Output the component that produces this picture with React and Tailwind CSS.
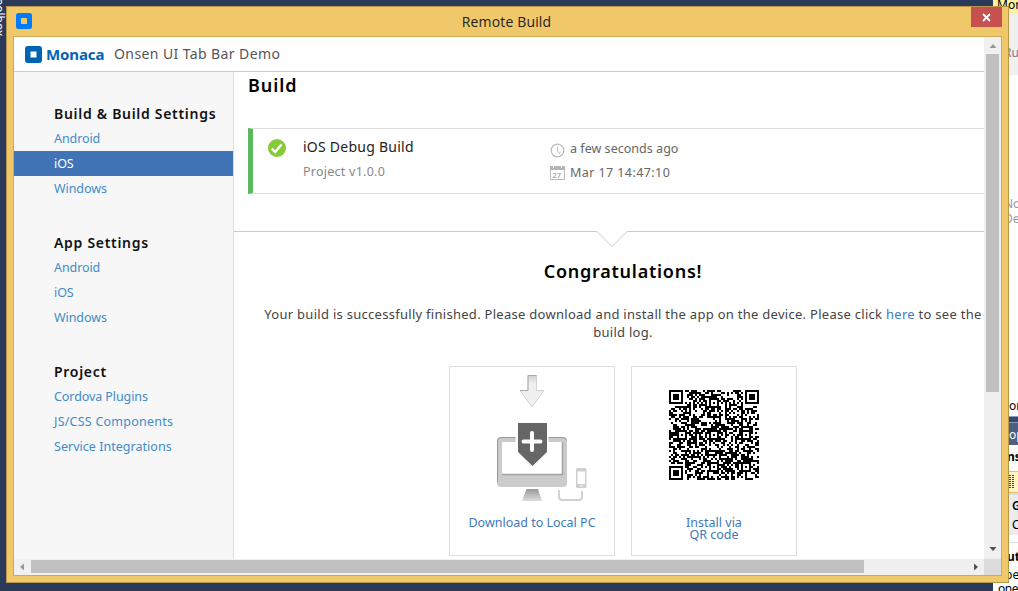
function T({ c = "", children }) {
  return <span className={"block whitespace-nowrap " + c}>{children}</span>;
}

const N = 45;
function qrPath() {
  let seed = 20177;
  const rnd = () => {
    seed = (seed * 1103515245 + 12345) % 2147483648;
    return seed / 2147483648;
  };
  const g = Array.from({ length: N }, () => Array.from({ length: N }, () => rnd() < 0.54));
  const square = (cx, cy, r, fn) => {
    for (let y = -r; y <= r; y++)
      for (let x = -r; x <= r; x++) {
        const yy = cy + y, xx = cx + x;
        if (yy >= 0 && xx >= 0 && yy < N && xx < N) g[yy][xx] = fn(Math.max(Math.abs(x), Math.abs(y)));
      }
  };
  for (let i = 8; i < N - 8; i++) { g[6][i] = i % 2 === 0; g[i][6] = i % 2 === 0; }
  [[22, 6], [6, 22], [22, 22], [38, 22], [22, 38], [38, 38]].forEach(([x, y]) => square(x, y, 2, (d) => d !== 1));
  [[3, 3], [41, 3], [3, 41]].forEach(([x, y]) => square(x, y, 4, (d) => d !== 2 && d !== 4));
  let p = "";
  g.forEach((row, y) => row.forEach((on, x) => { if (on) p += `M${x} ${y}h1v1h-1z`; }));
  return p;
}
const QR = qrPath();

const groups = [
  { title: "Build & Build Settings", items: [["Android"], ["iOS", true], ["Windows"]] },
  { title: "App Settings", items: [["Android"], ["iOS"], ["Windows"]] },
  { title: "Project", items: [["Cordova Plugins"], ["JS/CSS Components", false, "tracking-[0.23px]"], ["Service Integrations", false, "tracking-[0.03px]"]] },
];

function Sidebar() {
  return (
    <nav className="w-[220px] shrink-0 border-r border-[#ddd] bg-[#f7f7f7] pt-[29px]">
      {groups.map((g) => (
        <section key={g.title} className="mb-[29px]">
          <h2 className="h-[25px] pl-10 text-[14px] leading-[25px] font-semibold tracking-[0.7px] whitespace-nowrap text-[#111]">{g.title}</h2>
          {g.items.map(([n, on, track = "tracking-[-0.08px]"]) => (
            <a key={n} className={"block h-[25px] pl-10 text-[12.5px] leading-[25px] whitespace-nowrap " + track + (on ? " bg-[#4174b7] text-white" : " text-[#428bca]")}>{n}</a>
          ))}
        </section>
      ))}
    </nav>
  );
}

function DownloadArt() {
  return (
    <svg width="94" height="130" viewBox="0 0 94 130" className="block">
      <defs>
        <linearGradient id="ag" x1="0" y1="0" x2="0" y2="1"><stop offset="0" stopColor="#d2d2d2" /><stop offset=".25" stopColor="#eee" /><stop offset="1" stopColor="#f1f1f1" /></linearGradient>
        <linearGradient id="sg" x1="0" y1="0" x2="0" y2="1"><stop offset="0" stopColor="#999" /><stop offset="1" stopColor="#ddd" /></linearGradient>
      </defs>
      <path d="M31 1.500h8.500v15h7.500L35 33 23 16.500h8z" fill="url(#ag)" stroke="#c3c3c3" strokeWidth=".7" />
      <path d="M31 16V1.500H39.500M23 16.500h8" fill="none" stroke="#aaa" />
      <rect x="0" y="63" width="70" height="50" rx="4" fill="#cbcbcb" />
      <path d="M.5 108V67q0-3.500 3.500-3.500H66q3.500 0 3.500 3" fill="none" stroke="#999" />
      <path d="M5 68h60v32H5z" fill="#fff" />
      <path d="M5 100.500h60.500V68" fill="none" stroke="#a2a2a2" strokeWidth="1.500" />
      <path d="M18.500 62h33v24L35 99 18.500 86z" fill="#fff" />
      <path d="M21 49h29v29L35.500 92 21 78z" fill="#666" />
      <path d="M35 59v17M26.500 67.500h17" stroke="#fff" strokeWidth="4" strokeLinecap="round" />
      <path d="M29.500 115h11.500l4 12H25z" fill="url(#sg)" />
      <path d="M62 116v7q0 3 3 3h17q3 0 3-3v-6" fill="none" stroke="#d2d2d2" strokeWidth="2" />
      <rect x="79" y="94" width="10.500" height="20" rx="1.500" fill="#cfcfcf" />
      <path d="M80.500 97.500h7.500V110h-7.500z" fill="#fff" />
      <path d="M83 112h2.500" stroke="#fff" />
    </svg>
  );
}

function Header() {
  return (
    <header className="flex h-[35px] shrink-0 items-center border-b border-[#ccc] bg-white pl-[11px]">
      <svg width="17" height="17" viewBox="0 0 17 17"><rect width="17" height="17" rx="3" fill="#0064b5" /><path d="M5.500 5.500h6v6h-6z" fill="#fff" /></svg>
      <T c="ml-[4px] w-[68px] text-[15px] leading-[33px] font-bold tracking-[-0.1px] text-[#0064b5]">Monaca</T>
      <T c="pb-px text-[14px] leading-[33px] tracking-[0.4px] text-[#555]">Onsen UI Tab Bar Demo</T>
    </header>
  );
}

function BuildRow() {
  return (
    <div className="ml-[14px] flex h-[66px] border-y border-l-[5px] border-y-[#ddd] border-l-[#5cb85c]">
      <svg width="18" height="18" viewBox="0 0 18 18" className="mt-[10px] ml-[15px] shrink-0"><circle cx="9" cy="9" r="9" fill="#86cb35" /><path d="M3.700 9.500l3.500 3.500 6.300-7.500" fill="none" stroke="#fff" strokeWidth="2.300" /></svg>
      <div className="ml-[17px] w-[247px] pt-[6px]">
        <T c="h-[25px] text-[14px] leading-6 tracking-[0.25px] text-[#222]">iOS Debug Build</T>
        <T c="h-6 text-[12.5px] leading-6 tracking-[0.25px] text-[#888]">Project v1.0.0</T>
      </div>
      <div className="pt-[8px] text-[12.5px] text-[#666]">
        <div className="flex h-6 items-center gap-[5px]">
          <svg width="15" height="15" viewBox="0 0 15 15" fill="none" stroke="#bbb" className="mt-[3px]"><circle cx="7.500" cy="7.500" r="6.300" strokeWidth="1.200" /><path d="M7.500 3.500v4.500l2.500 3" /></svg>
          <T c="leading-6 tracking-[0.03px]">a few seconds ago</T>
        </div>
        <div className="flex h-6 items-center gap-[5px]">
          <svg width="15" height="15" viewBox="0 0 15 15"><path d="M.5.500h14v13H.5z" fill="#fff" stroke="#b8b8b8" /><path d="M0 0h15v4H0z" fill="#b5b5b5" /><path d="M3.500 0v2M11.500 0v2" stroke="#fff" /><text x="2.500" y="11.500" fontSize="7.500" fill="#888">27</text></svg>
          <T c="leading-6 tracking-[0.42px]">Mar 17 14:47:10</T>
        </div>
      </div>
    </div>
  );
}

function Main() {
  return (
    <main className="w-[750px] overflow-hidden bg-white">
      <h1 className="h-[56px] pl-[14px] text-[18px] leading-[26px] font-semibold tracking-[0.9px] text-black">Build</h1>
      <BuildRow />
      <svg width="750" height="17" viewBox="0 0 750 17" className="mt-[37px] block"><path d="M0 .5h363l15 15 15-15h357" fill="none" stroke="#ccc" /></svg>
      <h2 className="mt-[9px] flex h-[28px] justify-center pl-[28px] text-[18px] leading-[28px] font-semibold tracking-[0.75px] text-black">Congratulations!</h2>
      <div className="mt-[20px] flex flex-col items-center pl-[28px] text-[13px] leading-[18px] tracking-[0.28px] text-[#444]">
        <T c="h-[18px]">Your build is successfully finished. Please download and install the app on the device. Please click <a className="text-[#4078b8]">here</a> to see the</T>
        <T c="h-[18px]">build log.</T>
      </div>
      <div className="mt-[25px] ml-[215px] flex gap-4 text-[12.5px] text-[#4078b8]">
        <div className="h-[190px] w-[166px] border border-[#ddd] pt-[7px]">
          <div className="ml-[47px]"><DownloadArt /></div>
          <T c="mt-[13px] text-center leading-[12px]">Download to Local PC</T>
        </div>
        <div className="h-[190px] w-[166px] border border-[#ddd] pt-[23px]">
          <svg width="90" height="90" viewBox="0 0 45 45" shapeRendering="crispEdges" className="ml-[37px] block"><path d={QR} /></svg>
          <T c="mt-[37px] text-center leading-[12px]">Install via</T>
          <T c="text-center leading-[12px]">QR code</T>
        </div>
      </div>
    </main>
  );
}

function Arrow({ d, fill }) {
  return <svg width="8" height="8" viewBox="0 0 8 8" className="shrink-0"><path d={d} fill={fill} /></svg>;
}

function VScroll() {
  return (
    <div className="flex w-[17px] flex-col items-center bg-[#f0f0f0] pt-[5px] pb-[6px]">
      <Arrow d="M.5 6L4 2l3.500 4z" fill="#999" />
      <div className="mt-1 h-[338px] w-[13px] bg-[#c0c0c0]" />
      <div className="grow" />
      <Arrow d="M.5 2L4 6l3.500-4z" fill="#505050" />
    </div>
  );
}

function HScroll() {
  return (
    <div className="flex h-4 shrink-0">
      <div className="flex w-[970px] items-center bg-[#f0f0f0] pr-1 pb-px pl-1">
        <Arrow d="M6 .5L2 4l4 3.500z" fill="#999" />
        <div className="ml-[5px] h-[13px] w-[833px] bg-[#c0c0c0]" />
        <div className="grow" />
        <Arrow d="M2 .5L6 4 2 7.500z" fill="#505050" />
      </div>
      <div className="w-[17px] bg-[#dcdcdc]" />
    </div>
  );
}

function Window() {
  return (
    <div className="absolute top-[6px] left-[6px] flex h-[577px] w-[1003px] flex-col border border-[#b8964a] bg-[#f0c869] px-[6px] pb-[6px]">
      <div className="flex h-[29px] shrink-0 items-start pl-[3px]">
        <svg width="16" height="16" viewBox="0 0 16 16" className="mt-[6px]"><path fillRule="evenodd" d="M2.500 0h11Q16 0 16 2.500v11q0 2.500-2.500 2.500h-11Q0 16 0 13.500v-11Q0 0 2.500 0zM5 5v6h6V5z" fill="#007bff" /></svg>
        <T c="grow pl-[10px] text-center text-[14px] leading-[29px] tracking-[0.15px] text-[#222] font-['Open_Sans',sans-serif]">Remote Build</T>
        <div className="flex h-[20px] w-[31px] items-center justify-center bg-[#c75050]">
          <svg width="9" height="9" viewBox="0 0 9 9"><path d="M1 1l7 7M8 1L1 8" stroke="#fff" strokeWidth="1.800" /></svg>
        </div>
      </div>
      <div className="flex h-[540px] flex-col border border-[#d0a856]">
        <div className="flex h-[522px]">
          <div className="flex w-[970px] flex-col">
            <Header />
            <div className="flex h-[487px] overflow-hidden"><Sidebar /><Main /></div>
          </div>
          <VScroll />
        </div>
        <HScroll />
      </div>
    </div>
  );
}

function Backdrop() {
  return (
    <div className="flex h-full w-full justify-between">
      <div className="flex h-[36px] w-[6px] items-end justify-end overflow-hidden">
        <T c="text-[12px] leading-[13px] text-white [writing-mode:vertical-rl]">oolbox</T>
      </div>
      <div className="flex w-[25px] flex-col overflow-hidden bg-white text-[12px] text-black">
        <T c="h-[14px] shrink-0 bg-[#fff29d] pl-1 leading-[9px]">Mor</T>
        <T c="h-[61px] shrink-0 bg-[#f0f0f0] pl-[11px] leading-[78px] text-[#8a6d80]">Ru</T>
        <T c="mt-[121px] h-[15px] shrink-0 pl-[11px] leading-[15px] text-[#999]">No</T>
        <T c="h-[15px] shrink-0 pl-[11px] leading-[15px] text-[#999]">De</T>
        <T c="mt-[172px] h-[18px] shrink-0 pl-[16px] leading-[16px]">or</T>
        <div className="h-[7px] shrink-0 border-y border-[#8e9bbc] bg-[#35496a]" />
        <T c="h-[22px] shrink-0 bg-[#4d6082] pl-[16px] leading-[24px] text-white">op</T>
        <T c="h-[26px] shrink-0 bg-[#fcfcfc] pl-[14px] leading-[24px] font-bold">ns</T>
        <div className="flex h-[22px] shrink-0 items-center border-y border-[#e5c365] bg-[#fff4bf] pl-[16px]">
          <svg width="6" height="14" viewBox="0 0 6 14"><path d="M0 .5h6M0 2.500h6M0 4.500h6M0 6.500h6M0 8.500h6M0 10.500h6M0 12.500h6" stroke="#444" strokeDasharray="2 1" /></svg>
        </div>
        <div className="h-[42px] shrink-0 border-t-2 border-[#d5dbe8] bg-[#ebebf0] pt-[1px] pl-[19px]">
          <T c="leading-[19px] font-semibold">G</T>
          <T c="leading-[19px]">C</T>
        </div>
        <div className="h-[8px] shrink-0 border-b border-[#ddd]" />
        <T c="mt-[4px] h-[19px] shrink-0 pl-[14px] leading-[19px] font-bold">ut</T>
        <T c="h-[16px] shrink-0 pl-[12px] leading-[17px]">pe</T>
        <T c="shrink-0 pl-[5px] leading-[14px] tracking-[-0.5px]">one</T>
      </div>
    </div>
  );
}

export default function App() {
  return (
    <div className="relative h-[591px] w-[1018px] overflow-hidden bg-[#2b3a58] font-['Noto_Sans',sans-serif]">
      <Backdrop />
      <Window />
    </div>
  );
}
